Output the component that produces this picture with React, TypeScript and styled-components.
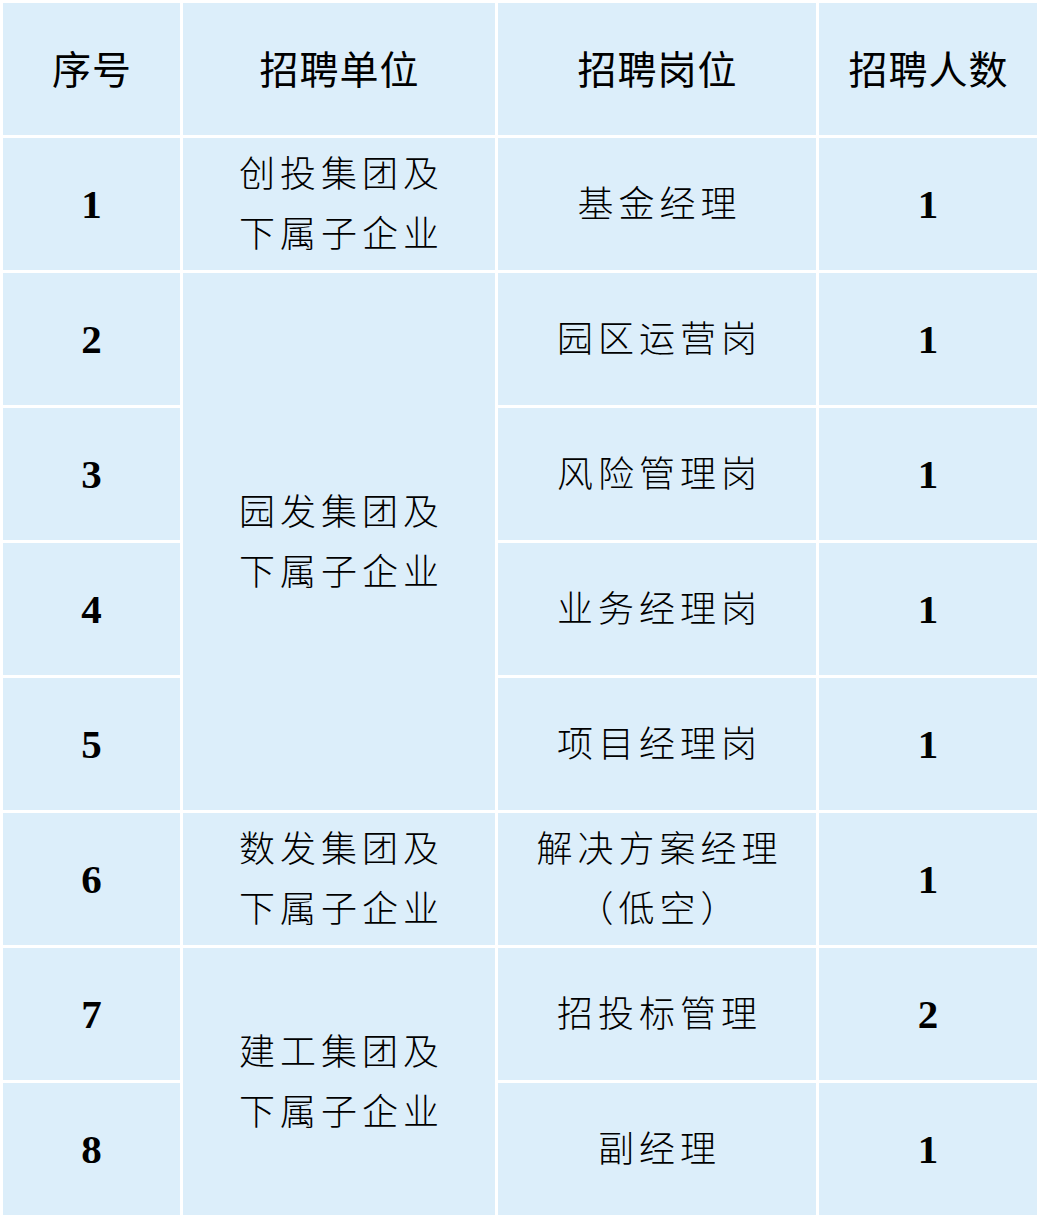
import React from "react";
import styled, { createGlobalStyle } from "styled-components";

const Global = createGlobalStyle`
  html, body { margin: 0; padding: 0; background: #ffffff; }
  #root { width: 1040px; }
`;

const Grid = styled.div`
  display: grid;
  grid-template-columns: 177px 312px 318px 218px;
  grid-auto-rows: 132px;
  gap: 3px;
  padding: 3px;
  background: #ffffff;
  width: 1040px;
  box-sizing: border-box;
`;

const Cell = styled.div<{ $col: number; $row: number; $span?: number }>`
  grid-column: ${(p) => p.$col};
  grid-row: ${(p) => p.$row} / span ${(p) => p.$span ?? 1};
  background: #dceefa;
  display: flex;
  flex-direction: column;
  align-items: center;
  justify-content: center;
  text-align: center;
  color: #000;
`;

const HeadText = styled.span`
  font-family: "Noto Sans CJK SC", "Noto Sans", sans-serif;
  font-size: 39px;
  font-weight: 400;
  letter-spacing: 1px;
  padding-left: 1px;
  line-height: 1;
  margin-top: -4px;
`;

const BodyText = styled.span`
  font-family: "Noto Sans CJK SC", "Noto Sans", sans-serif;
  font-size: 36px;
  font-weight: 300;
  letter-spacing: 5px;
  padding-left: 5px;
  line-height: 60px;
  display: block;
  position: relative;
  top: -3px;
`;

const Num = styled.span`
  font-family: "Liberation Serif", "Times New Roman", serif;
  font-size: 41px;
  font-weight: 700;
  line-height: 1;
`;

const headers = ["序号", "招聘单位", "招聘岗位", "招聘人数"];

const units: { row: number; span: number; lines: string[] }[] = [
  { row: 2, span: 1, lines: ["创投集团及", "下属子企业"] },
  { row: 3, span: 4, lines: ["园发集团及", "下属子企业"] },
  { row: 7, span: 1, lines: ["数发集团及", "下属子企业"] },
  { row: 8, span: 2, lines: ["建工集团及", "下属子企业"] },
];

const jobs: { pos: string[]; count: string }[] = [
  { pos: ["基金经理"], count: "1" },
  { pos: ["园区运营岗"], count: "1" },
  { pos: ["风险管理岗"], count: "1" },
  { pos: ["业务经理岗"], count: "1" },
  { pos: ["项目经理岗"], count: "1" },
  { pos: ["解决方案经理", "（低空）"], count: "1" },
  { pos: ["招投标管理"], count: "2" },
  { pos: ["副经理"], count: "1" },
];

export default function App() {
  return (
    <>
      <Global />
      <Grid>
        {headers.map((h, i) => (
          <Cell key={h} $col={i + 1} $row={1}>
            <HeadText>{h}</HeadText>
          </Cell>
        ))}
        {jobs.map((j, i) => (
          <React.Fragment key={i}>
            <Cell $col={1} $row={i + 2}>
              <Num>{i + 1}</Num>
            </Cell>
            <Cell $col={3} $row={i + 2}>
              {j.pos.map((l) => (
                <BodyText key={l}>{l}</BodyText>
              ))}
            </Cell>
            <Cell $col={4} $row={i + 2}>
              <Num>{j.count}</Num>
            </Cell>
          </React.Fragment>
        ))}
        {units.map((u) => (
          <Cell key={u.row} $col={2} $row={u.row} $span={u.span}>
            {u.lines.map((l) => (
              <BodyText key={l}>{l}</BodyText>
            ))}
          </Cell>
        ))}
      </Grid>
    </>
  );
}
